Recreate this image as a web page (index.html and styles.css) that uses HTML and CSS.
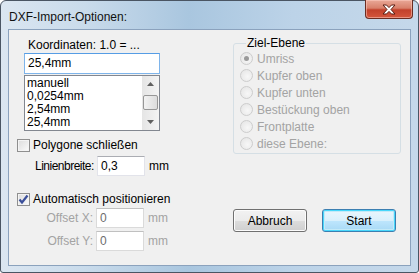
FILE: index.html
```html
<!DOCTYPE html>
<html lang="de">
<head>
  <meta charset="UTF-8" />
  <title>DXF-Import-Optionen</title>
  <link rel="stylesheet" href="styles.css">
</head>
<body>

  <div class="fenster">
    <div class="titelleiste">
      <span class="titel">DXF-Import-Optionen:</span>
      <div class="schliessen">
        <svg width="16" height="11" viewBox="0 0 16 11">
          <path d="M2 1 L5.5 1 L8 3.6 L10.5 1 L14 1 L10 5.5 L14 10 L10.5 10 L8 7.4 L5.5 10 L2 10 L6 5.5 Z" fill="#fff" stroke="#5a1d12" stroke-width="1"/>
        </svg>
      </div>
    </div>

    <div class="inhalt">
      <div class="links">
        <div class="text koord-label">Koordinaten: 1.0 = ...</div>
        <div class="eingabe koord-eingabe">25,4mm</div>
        <div class="liste">
          <div class="eintraege">
            <div>manuell</div>
            <div>0,0254mm</div>
            <div>2,54mm</div>
            <div>25,4mm</div>
          </div>
          <div class="scrollbar">
            <div class="pfeil">
              <svg width="7" height="4" viewBox="0 0 7 4"><path d="M0 4 L3.5 0 L7 4 Z" fill="#606060"/></svg>
            </div>
            <div class="schieber"></div>
            <div class="pfeil">
              <svg width="7" height="4" viewBox="0 0 7 4"><path d="M0 0 L7 0 L3.5 4 Z" fill="#606060"/></svg>
            </div>
          </div>
        </div>

        <div class="check check-polygone"><span class="box"></span>Polygone schließen</div>
        <div class="zeile zeile-linie">
          <span class="beschriftung">Linienbreite:</span>
          <div class="eingabe klein">0,3</div>
          <span class="einheit">mm</span>
        </div>

        <div class="check check-auto">
          <span class="box">
            <svg width="11" height="11" viewBox="0 0 11 11"><path d="M1.5 5.5 L4 8.5 L9.5 1.5" fill="none" stroke="#3b4f9a" stroke-width="2.2"/></svg>
          </span>Automatisch positionieren
        </div>
        <div class="zeile zeile-offset grau">
          <span class="beschriftung rechtsbuendig">Offset X:</span>
          <div class="eingabe klein aus">0</div>
          <span class="einheit">mm</span>
        </div>
        <div class="zeile zeile-offset2 grau">
          <span class="beschriftung rechtsbuendig">Offset Y:</span>
          <div class="eingabe klein aus">0</div>
          <span class="einheit">mm</span>
        </div>
      </div>

      <div class="rechts">
        <fieldset class="gruppe">
          <legend>Ziel-Ebene</legend>
          <div class="radio"><span class="kreis an"></span>Umriss</div>
          <div class="radio"><span class="kreis"></span>Kupfer oben</div>
          <div class="radio"><span class="kreis"></span>Kupfer unten</div>
          <div class="radio"><span class="kreis"></span>Bestückung oben</div>
          <div class="radio"><span class="kreis"></span>Frontplatte</div>
          <div class="radio"><span class="kreis"></span>diese Ebene:</div>
        </fieldset>

        <div class="knoepfe">
          <div class="knopf">Abbruch</div>
          <div class="knopf standard">Start</div>
        </div>
      </div>
    </div>
  </div>

</body>
</html>
```

FILE: styles.css
```css
* { margin: 0; padding: 0; box-sizing: border-box; }

body {
  background: #fff;
  font-family: "Liberation Sans", Arial, sans-serif;
  font-size: 12px;
  color: #000;
}

.fenster {
  width: 419px;
  height: 273px;
  border: 1px solid #4a5563;
  border-radius: 6px 6px 3px 3px;
  background: linear-gradient(90deg, #dbe6f1 0%, #c9dbeb 20%, #a9c6df 45%, #bcd3e8 70%, #c5d8ea 100%);
  display: flex;
  flex-direction: column;
}

.titelleiste {
  height: 28px;
  display: flex;
  align-items: flex-start;
  justify-content: space-between;
}

.titel {
  font-size: 12px;
  margin: 9px 0 0 8px;
  color: #111;
}

.schliessen {
  width: 48px;
  height: 19px;
  margin: -1px 5px 0 0;
  border: 1px solid #6b2d22;
  border-top: none;
  border-radius: 0 0 4px 4px;
  background: linear-gradient(180deg, #e9a897 0%, #d8806b 45%, #c2412b 55%, #d4563c 100%);
  box-shadow: inset 0 0 0 1px rgba(255, 210, 200, 0.5);
  display: flex;
  align-items: center;
  justify-content: center;
}

.inhalt {
  height: 237px;
  margin: 0 7px;
  border: 1px solid #8ba2bd;
  background: #f0f0f0;
  display: flex;
  padding: 9px 0 0 8px;
}

.links {
  width: 208px;
  display: flex;
  flex-direction: column;
}

.text { line-height: 13px; }

.koord-label { margin-left: 11px; }

.eingabe {
  background: #fff;
  border: 1px solid #e2e3ea;
  border-top-color: #abadb3;
  line-height: 17px;
  padding: 0 0 0 3px;
}

.koord-eingabe {
  width: 136px;
  height: 21px;
  margin: 1px 0 0 7px;
  line-height: 19px;
  border-color: #7eb4ea;
  border-top-color: #569de5;
}

.liste {
  width: 136px;
  height: 56px;
  margin: 1px 0 0 7px;
  background: #fff;
  border: 1px solid #828790;
  display: flex;
}

.eintraege {
  flex-grow: 1;
  padding: 1px 0 0 2px;
  line-height: 13px;
  overflow: hidden;
}

.scrollbar {
  width: 17px;
  background: linear-gradient(90deg, #e5e5e5, #f4f4f4);
  display: flex;
  flex-direction: column;
}

.pfeil {
  height: 17px;
  display: flex;
  align-items: center;
  justify-content: center;
}

.schieber {
  height: 16px;
  margin: 2px 1px 3px 1px;
  border: 1px solid #979797;
  border-radius: 2px;
  background: linear-gradient(90deg, #f3f3f3, #dcdcdc);
}

.check {
  display: flex;
  align-items: center;
  height: 13px;
  line-height: 13px;
}

.check-polygone { margin-top: 8px; }
.check-auto { margin-top: 17px; }

.box {
  width: 13px;
  height: 13px;
  margin-right: 3px;
  border: 1px solid #8f8f8f;
  background: linear-gradient(135deg, #dcdcdc, #fbfbfb);
  box-shadow: inset 0 0 0 1px #f4f4f4;
  display: flex;
  align-items: center;
  justify-content: center;
}

.zeile {
  display: flex;
  align-items: center;
}

.zeile-linie { margin: 4px 0 0 18px; }
.zeile-offset { margin-top: 2px; }
.zeile-offset2 { margin-top: 3px; }

.beschriftung { margin-right: 2px; }

.zeile-linie .beschriftung {
  width: 60px;
  letter-spacing: -0.5px;
  white-space: nowrap;
}

.rechtsbuendig {
  width: 76px;
  text-align: right;
  margin-right: 3px;
}

.klein {
  width: 48px;
  height: 20px;
  line-height: 18px;
}

.einheit { margin-left: 4px; }

.grau { color: #a3a3a3; }

.aus {
  border-color: #dadada;
  border-top-color: #c0c0c0;
  color: #6d6d6d;
}

.rechts {
  padding-left: 8px;
  display: flex;
  flex-direction: column;
}

.gruppe {
  width: 168px;
  height: 118px;
  margin-top: -3px;
  border: 1px solid #d5dfe5;
  border-radius: 3px;
  padding: 0 0 0 6px;
}

.gruppe legend {
  margin-left: 6px;
  padding: 0 1px;
  line-height: 14px;
  color: #000;
}

.radio {
  display: flex;
  align-items: center;
  height: 17px;
  color: #a3a3a3;
}

.kreis {
  width: 13px;
  height: 13px;
  margin-right: 4px;
  border-radius: 50%;
  border: 1px solid #cdcdcd;
  background: radial-gradient(circle at 60% 60%, #f7f7f7, #e3e3e3);
  display: flex;
  align-items: center;
  justify-content: center;
}

.kreis.an::after {
  content: "";
  width: 5px;
  height: 5px;
  border-radius: 50%;
  background: #9a9a9a;
}

.knoepfe {
  display: flex;
  gap: 15px;
  margin-top: 55px;
}

.knopf {
  width: 74px;
  height: 23px;
  border: 1px solid #707070;
  border-radius: 3px;
  background: linear-gradient(180deg, #f2f2f2 0%, #ebebeb 50%, #dddddd 51%, #cfcfcf 100%);
  box-shadow: inset 0 0 0 1px #fcfcfc;
  display: flex;
  align-items: center;
  justify-content: center;
}

.knopf.standard {
  border-color: #3c7fb1;
  box-shadow: inset 0 0 0 1px #48d7fb, inset 0 0 0 2px #c4eaf8;
  background: linear-gradient(180deg, #eaf6fd 0%, #d9f0fc 50%, #bee6fd 51%, #a7d9f5 100%);
}
```
